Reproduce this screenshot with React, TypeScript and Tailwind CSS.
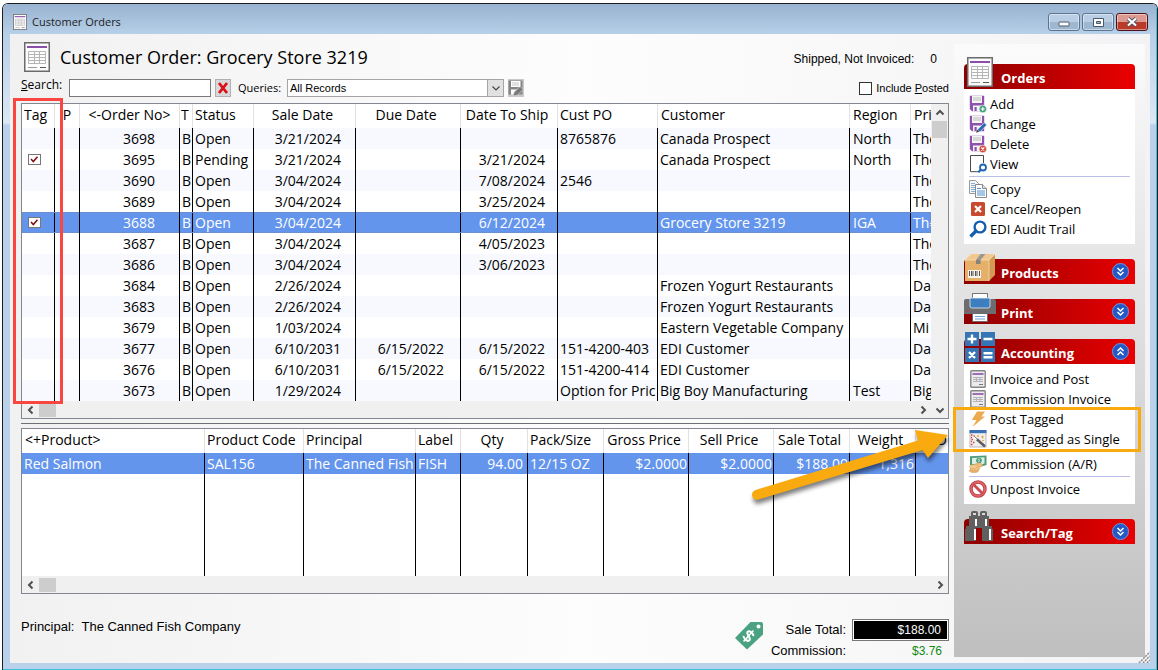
import React from "react";
import clsx from "clsx";

interface Column {
  label: string;
  width?: string;
  head: string;
  cell: string;
}

interface OrderRow {
  tag?: boolean;
  selected?: boolean;
  cells: string[];
}

const ORDER_COLUMNS: Column[] = [
  { label: "P", width: "w-[25px]", head: "text-center", cell: "text-center" },
  { label: "<-Order No>", width: "w-[100px]", head: "text-center", cell: "text-right pr-6" },
  { label: "T", width: "w-[13px]", head: "pl-px", cell: "pl-[2px]" },
  { label: "Status", width: "w-[61px]", head: "pl-[2px]", cell: "pl-[2px]" },
  { label: "Sale Date", width: "w-[102px]", head: "text-center pr-1", cell: "text-right pr-3.5" },
  { label: "Due Date", width: "w-[105px]", head: "text-center pr-1", cell: "text-right pr-4" },
  { label: "Date To Ship", width: "w-[97px]", head: "text-center pr-1", cell: "text-right pr-3" },
  { label: "Cust PO", width: "w-[100px]", head: "pl-[2px]", cell: "pl-[2px]" },
  { label: "Customer", width: "w-[192px]", head: "pl-[3px]", cell: "pl-[2px]" },
  { label: "Region", width: "w-[61px]", head: "pl-[3px]", cell: "pl-[3px]" },
  { label: "Pri", head: "pl-[3px]", cell: "pl-[2px]" },
];

const ORDERS: OrderRow[] = [
  { cells: ["", "3698", "B", "Open", "3/21/2024", "", "", "8765876", "Canada Prospect", "North", "The"] },
  { tag: true, cells: ["", "3695", "B", "Pending", "3/21/2024", "", "3/21/2024", "", "Canada Prospect", "North", "The"] },
  { cells: ["", "3690", "B", "Open", "3/04/2024", "", "7/08/2024", "2546", "", "", "The"] },
  { cells: ["", "3689", "B", "Open", "3/04/2024", "", "3/25/2024", "", "", "", "The"] },
  { tag: true, selected: true, cells: ["", "3688", "B", "Open", "3/04/2024", "", "6/12/2024", "", "Grocery Store 3219", "IGA", "The"] },
  { cells: ["", "3687", "B", "Open", "3/04/2024", "", "4/05/2023", "", "", "", "The"] },
  { cells: ["", "3686", "B", "Open", "3/04/2024", "", "3/06/2023", "", "", "", "The"] },
  { cells: ["", "3684", "B", "Open", "2/26/2024", "", "", "", "Frozen Yogurt Restaurants", "", "Da"] },
  { cells: ["", "3683", "B", "Open", "2/26/2024", "", "", "", "Frozen Yogurt Restaurants", "", "Da"] },
  { cells: ["", "3679", "B", "Open", "1/03/2024", "", "", "", "Eastern Vegetable Company", "", "Mi"] },
  { cells: ["", "3677", "B", "Open", "6/10/2031", "6/15/2022", "6/15/2022", "151-4200-403", "EDI Customer", "", "Da"] },
  { cells: ["", "3676", "B", "Open", "6/10/2031", "6/15/2022", "6/15/2022", "151-4200-414", "EDI Customer", "", "Da"] },
  { cells: ["", "3673", "B", "Open", "1/29/2024", "", "", "Option for Pric", "Big Boy Manufacturing", "Test", "Big"] },
];

const PRODUCT_COLUMNS: Column[] = [
  { label: "<+Product>", width: "w-[183px]", head: "pl-[3px]", cell: "pl-[2px]" },
  { label: "Product Code", width: "w-[99px]", head: "pl-[2px]", cell: "pl-[2px]" },
  { label: "Principal", width: "w-[112px]", head: "pl-[2px]", cell: "pl-[2px]" },
  { label: "Label", width: "w-[45px]", head: "pl-[2px]", cell: "pl-[2px]" },
  { label: "Qty", width: "w-[67px]", head: "text-center pr-1", cell: "text-right pr-1" },
  { label: "Pack/Size", width: "w-[76px]", head: "pl-[2px]", cell: "pl-[2px]" },
  { label: "Gross Price", width: "w-[85px]", head: "text-center pr-1", cell: "text-right pr-px" },
  { label: "Sell Price", width: "w-[85px]", head: "text-center pr-1", cell: "text-right pr-px" },
  { label: "Sale Total", width: "w-[76px]", head: "text-center pr-1", cell: "text-right pr-px" },
  { label: "Weight", width: "w-[66px]", head: "text-center pr-1", cell: "text-right pr-px" },
  { label: "D", head: "text-right pr-px", cell: "text-right" },
];

const PRODUCT = ["Red Salmon", "SAL156", "The Canned Fish", "FISH", "94.00", "12/15 OZ", "$2.0000", "$2.0000", "$188.00", "1,316", ""];

/* ---------- icons ---------- */

const FormIcon = ({ className }: { className?: string }) => (
  <svg viewBox="0 0 26 30" className={className} aria-hidden="true">
    <rect x="0.75" y="0.75" width="24.5" height="28.5" fill="#fdfdfd" stroke="#6b6b6b" strokeWidth="1.5" />
    <rect x="3" y="4" width="20" height="2" fill="#8a4fa8" />
    <path d="M4.5 9.5h17v12h-17zM4.5 12.5h17M4.5 15.5h17M4.5 18.5h17M10.5 9.5v12M15.5 9.5v12" fill="none" stroke="#b5b5b5" />
    <path d="M4 25.5h9" stroke="#9a9a9a" />
    <path d="M16 25.5h6" stroke="#555" />
  </svg>
);

const Floppy = () => (
  <>
    <path d="M0.8 0.8H15.2V16.2H3L0.8 14z" fill="#8e52ae" />
    <rect x="3" y="1" width="10" height="7" fill="#f4f4f4" />
    <path d="M4 3h8M4 5h8" stroke="#bdbdbd" />
    <rect x="4" y="10.5" width="8" height="5.7" fill="#f4f4f4" />
    <rect x="5.5" y="12" width="2.2" height="4" fill="#8e52ae" />
  </>
);

const Icon = ({ children }: { children: React.ReactNode }) => (
  <svg viewBox="0 0 18 18" className="h-[18px] w-[18px] shrink-0" aria-hidden="true">
    {children}
  </svg>
);

const AddIcon = () => (
  <Icon>
    <Floppy />
    <circle cx="13.8" cy="14" r="3.8" fill="#3f9f7b" stroke="#fff" strokeWidth="0.6" />
    <path d="M13.8 12v4M11.8 14h4" stroke="#fff" strokeWidth="1.2" />
  </Icon>
);

const ChangeIcon = () => (
  <Icon>
    <Floppy />
    <path d="M8.2 15l7-7.4 2.6 2.4-7 7z" fill="#2d6cb5" stroke="#fff" strokeWidth="0.6" />
    <path d="M7 17.8l1.4-3 1.8 1.9z" fill="#3b3b3b" />
  </Icon>
);

const DeleteIcon = () => (
  <Icon>
    <Floppy />
    <circle cx="13.8" cy="14" r="3.8" fill="#cf4a35" stroke="#fff" strokeWidth="0.6" />
    <path d="M12.3 12.5l3 3M15.3 12.5l-3 3" stroke="#fff" strokeWidth="1.2" />
  </Icon>
);

const ViewIcon = () => (
  <Icon>
    <path d="M14.5 8V0.5H1.5v16.2H10" fill="#fff" stroke="#4a4a4a" />
    <circle cx="14" cy="12.5" r="3" fill="#fff" stroke="#1f66b3" strokeWidth="1.8" />
    <path d="M11.8 14.8L9.4 17.2" stroke="#1f66b3" strokeWidth="2.2" />
  </Icon>
);

const CopyIcon = () => (
  <Icon>
    <path d="M0.5 0.5H6.5L9.5 3.5V13.5H0.5z" fill="#f6f6f6" stroke="#9a9a9a" />
    <path d="M2 3.5h4M2 5.5h5M2 7.5h5M2 9.5h5M2 11.5h5" stroke="#7fb0dc" />
    <path d="M6.5 4.5H13.5L17.5 8.5V17.5H6.5z" fill="#fff" stroke="#8b8b8b" />
    <path d="M13.5 4.5v4h4" fill="#ddd" stroke="#8b8b8b" />
    <path d="M8 8.5h4M8 11h8M8 13h8M8 15h8" stroke="#4d8fce" />
  </Icon>
);

const CancelIcon = () => (
  <Icon>
    <rect x="2" y="2" width="14" height="14" rx="1.5" fill="#c9492f" />
    <path d="M6 6l6 6M12 6l-6 6" stroke="#fff" strokeWidth="2.2" />
  </Icon>
);

const AuditIcon = () => (
  <Icon>
    <circle cx="11" cy="7" r="5.4" fill="#fff" stroke="#155fb0" strokeWidth="2.4" />
    <path d="M7 11L1.5 16.5" stroke="#155fb0" strokeWidth="3.4" />
  </Icon>
);

const InvoiceIcon = () => (
  <Icon>
    <rect x="1.8" y="0.8" width="14.4" height="16.4" rx="0.8" fill="#ececef" stroke="#858585" strokeWidth="1.4" />
    <path d="M3.5 4h11" stroke="#8a4fa8" strokeWidth="1.6" />
    <path d="M4 7.5h10M4 9.5h10M4 11.5h10M7.5 7v5M11 7v5" stroke="#b4b4b8" />
    <path d="M10 14.5h4" stroke="#777" />
  </Icon>
);

const BoltIcon = () => (
  <Icon>
    <path d="M8 1.5H16L12.5 6.5H16L3.5 17L7.5 10H2.8z" fill="#eeaa50" />
  </Icon>
);

const WizardIcon = () => (
  <Icon>
    <rect x="1" y="0.5" width="16" height="16.5" fill="#f0f0f0" stroke="#a9a9a9" strokeWidth="0.8" />
    <rect x="0.5" y="0" width="17" height="3.2" fill="#3a72b8" />
    <path d="M2 5h1.5M4.5 5.800h1M2 7.500h1M2.500 9.500h1.500M2 11.500h1M4 12.500h1.500M2 14.500h1.500" stroke="#d9443c" strokeWidth="1.400" fill="none" />
    <path d="M7 8.500l9 8" stroke="#5f5f63" strokeWidth="2.600" />
    <path d="M5.500 7.200l2.400 2.200" stroke="#fff" strokeWidth="2.600" />
    <path d="M5.200 6.200l3 2.800" stroke="#77777b" strokeWidth="1" />
    <path d="M9 5v2M8 6h2M13.500 5.500v3M12 7h3M13 10.500h2" stroke="#edaa44" />
  </Icon>
);

const MoneyIcon = () => (
  <Icon>
    <path d="M1 1.2L17.5 0.5V10L9 12.5L1 10z" fill="#4d9b7a" />
    <path d="M3 3l12.5-0.8V8.5L9 10.4L3 8.8z" fill="#dcefe6" />
    <circle cx="10" cy="5.5" r="2.8" fill="#4d9b7a" />
    <path d="M11 4.3c-1.4-.9-2.4.4-1 1s.4 1.9-1 1.1" stroke="#fff" strokeWidth="0.7" fill="none" />
    <ellipse cx="9.5" cy="10.2" rx="4" ry="2" fill="#f0bd78" stroke="#d9a35c" strokeWidth="0.6" />
    <ellipse cx="5" cy="15.6" rx="4.6" ry="2" fill="#eab06a" stroke="#d9a35c" strokeWidth="0.6" />
    <ellipse cx="6" cy="13.6" rx="4.6" ry="2" fill="#f2c283" stroke="#d9a35c" strokeWidth="0.6" />
    <ellipse cx="4.6" cy="11.6" rx="4.2" ry="1.9" fill="#f5cc94" stroke="#d9a35c" strokeWidth="0.6" />
  </Icon>
);

const UnpostIcon = () => (
  <Icon>
    <circle cx="9" cy="9" r="7" fill="#fff" stroke="#b93a40" strokeWidth="3.4" />
    <circle cx="9" cy="9" r="7" fill="none" stroke="#dc6468" strokeWidth="1.8" />
    <path d="M4.2 4.2l9.6 9.6" stroke="#cd4a50" strokeWidth="2.8" />
  </Icon>
);

const BoxIcon = () => (
  <svg viewBox="0 0 31 29" className="h-[29px] w-[31px]" aria-hidden="true">
    <path d="M1 7H25V28H1z" fill="#e6b06a" />
    <path d="M25 7L31 1V22L25 28z" fill="#d39a52" />
    <path d="M1 7L7 1H31L25 7z" fill="#f1c98f" />
    <path d="M1 7h24v21M25 7l6-6M1 7l6-6" fill="none" stroke="#f8e2bd" strokeWidth="0.7" />
    <path d="M16.500 1h5l-5 6h-4.500z" fill="#9b9891" />
    <path d="M12 7h4.500v4H12z" fill="#86837c" />
    <rect x="4" y="17" width="13" height="8" fill="#f7f2ea" />
    <path d="M5.5 18v5M7.5 18v5M9 18v5M11.5 18v5M13 18v5M15.5 18v5" stroke="#555" />
  </svg>
);

const PrinterIcon = () => (
  <svg viewBox="0 0 32 29" className="h-[29px] w-8" aria-hidden="true">
    <path d="M0 8q0-2 2-2h28q2 0 2 2v13H0z" fill="#6d6d6f" />
    <rect x="8.5" y="0.5" width="15" height="6" fill="#fff" stroke="#777" />
    <path d="M6 5h20v8q0 2-2 2H8q-2 0-2-2z" fill="#3d7ebf" stroke="#e9eef4" strokeWidth="0.8" />
    <rect x="2" y="17.5" width="3" height="1" fill="#c33" />
    <rect x="8.5" y="20.500" width="15" height="8" fill="#fff" stroke="#6a6a6a" />
    <path d="M11 23.5h10M11 26h10" stroke="#6fa3d4" />
  </svg>
);

const CalcIcon = () => (
  <svg viewBox="0 0 31 30" className="h-[30px] w-[31px]" aria-hidden="true">
    <path d="M1 0h14v14H1zM17 0h14v14H17zM1 16h14v14H1zM17 16h14v14H17z" fill="#3574b5" />
    <path d="M3.5 7h9M8 2.5v9M19.5 7h9" stroke="#fff" strokeWidth="2.4" />
    <path d="M5 20l6 6M11 20l-6 6M19.5 21.2h9M19.5 25.2h9" stroke="#fff" strokeWidth="2.4" />
  </svg>
);

const BinocularsIcon = () => (
  <svg viewBox="0 0 30 32" className="h-8 w-[30px]" aria-hidden="true">
    <path d="M7 3q0-2 2-2h3q2 0 2 2v3h2V3q0-2 2-2h3q2 0 2 2v3h2v10h3v3h1v12H18V18h-6v13H1V19h1v-3h3V6h2z" fill="#606060" />
    <path d="M9 4h3M18 4h3" stroke="#fff" strokeWidth="1.4" />
    <path d="M12 9v7M22 9v7M11 19v11M26 19v11" stroke="#fff" strokeWidth="2" />
  </svg>
);

const PriceTagIcon = () => (
  <svg viewBox="0 0 28 29" className="h-[29px] w-7" aria-hidden="true">
    <path d="M15.5 1H26q2 0 2 2v10.5L12 28.5L0 17z" fill="#4ba282" />
    <circle cx="23.5" cy="5.5" r="2" fill="#fff" />
    <g transform="translate(13.500 15) rotate(42)" fill="none" stroke="#fff" strokeWidth="2">
      <path d="M3.600-3.200C2-5.400-3.400-5.200-3.400-2.400S3.600-0.400 3.600 2.400-2 5.400-3.800 3.200" />
      <path d="M0-7.400v14.800" strokeWidth="1.600" />
    </g>
  </svg>
);

/* ---------- window parts ---------- */

const CAPTION_BUTTON =
  "flex h-[18px] w-8 items-center justify-center rounded-[3px] border shadow-[inset_0_0_0_1px_rgba(255,255,255,0.45)]";

const TitleBar = () => (
  <header className="flex h-[30px] shrink-0 items-center pt-1.5 pr-2 pl-2.5">
    <FormIcon className="h-4 w-3.5" />
    <span className="ml-[5px] flex-1 text-[11px] text-[#1c1c1c]">Customer Orders</span>
    <div className="flex gap-0.5">
      <button aria-label="Minimize" className={clsx(CAPTION_BUTTON, "border-[#5c7590] bg-linear-to-b from-[#b9cee4] from-50% to-[#9fb8d2] to-50%")}>
        <svg viewBox="0 0 12 6" className="mt-1 h-1.5 w-3" aria-hidden="true">
          <rect x="1" y="1" width="10" height="4" rx="0.5" fill="#fff" stroke="#4b5867" />
        </svg>
      </button>
      <button aria-label="Maximize" className={clsx(CAPTION_BUTTON, "border-[#5c7590] bg-linear-to-b from-[#b9cee4] from-50% to-[#9fb8d2] to-50%")}>
        <svg viewBox="0 0 11 9" className="h-[9px] w-[11px]" aria-hidden="true">
          <path d="M0.5 0.5h10v8h-10zM3.5 3.5h4v2h-4z" fill="#fff" fillRule="evenodd" stroke="#4b5867" />
        </svg>
      </button>
      <button aria-label="Close" className={clsx(CAPTION_BUTTON, "border-[#4c1119] bg-linear-to-b from-[#dc9a90] from-50% to-[#b93a28] to-50%")}>
        <svg viewBox="0 0 12 10" className="h-2.5 w-3" aria-hidden="true">
          <path d="M2 1.5l8 7M10 1.5l-8 7" stroke="#52535f" strokeWidth="4" />
          <path d="M2 1.5l8 7M10 1.5l-8 7" stroke="#fff" strokeWidth="2.2" />
        </svg>
      </button>
    </div>
  </header>
);

const Arrow = ({ dir }: { dir: "left" | "right" | "up" | "down" }) => {
  const paths = {
    left: "M6.5 1.5L3 5l3.5 3.5",
    right: "M3.5 1.5L7 5L3.5 8.5",
    up: "M1.5 6.5L5 3l3.5 3.5",
    down: "M1.5 3.5L5 7l3.5-3.5",
  };
  return (
    <svg viewBox="0 0 10 10" className="h-2.5 w-2.5" aria-hidden="true">
      <path d={paths[dir]} fill="none" stroke="#505050" strokeWidth="2" />
    </svg>
  );
};

const HScroll = ({ corner }: { corner?: boolean }) => (
  <div className="flex h-[17px] items-center bg-[#f0f0f0]">
    <div className="flex w-[17px] justify-center">
      <Arrow dir="left" />
    </div>
    <div className="h-3.5 w-[17px] bg-[#cdcdcd]" />
    <div className="flex-1" />
    <div className="flex w-[17px] justify-center">
      <Arrow dir="right" />
    </div>
    {corner && (
      <div className="flex w-[17px] justify-center">
        <Arrow dir="down" />
      </div>
    )}
  </div>
);

const Toolbar = () => (
  <div className="mt-[5px] flex h-5 items-end text-[12px]">
    <label htmlFor="search" className="w-12 self-start leading-4">
      <u>S</u>earch:
    </label>
    <input id="search" type="text" className="h-[18px] w-[142px] border border-[#7a7a7a] bg-white px-1 outline-none" />
    <button aria-label="Clear search" className="ml-1 flex h-[18px] w-4 items-center justify-center border border-[#b0b0b0] bg-[#d9d9d9]">
      <svg viewBox="0 0 12 12" className="h-3 w-3" aria-hidden="true">
        <path d="M2 1l8 10M10 1L2 11" stroke="#dc0f14" strokeWidth="2.8" />
      </svg>
    </button>
    <label htmlFor="queries" className="ml-[7px] w-[49px] text-[11px] leading-[18px]">
      Queries:
    </label>
    <div className="relative">
      <select
        id="queries"
        className="block h-[18px] w-[217px] appearance-none border border-[#a5a5a5] bg-white pl-[2px] font-['Liberation_Sans',sans-serif] text-[11px] outline-none">
        <option>All Records</option>
      </select>
      <span className="pointer-events-none absolute top-0 right-0 flex h-[18px] w-[17px] items-center justify-center border border-[#a5a5a5] bg-[#e1e1e1]">
        <svg viewBox="0 0 10 10" className="h-2.5 w-2.5" aria-hidden="true">
          <path d="M1.5 3.5L5 7l3.5-3.5" fill="none" stroke="#444" strokeWidth="1.2" />
        </svg>
      </span>
    </div>
    <button aria-label="Save query" className="ml-1 h-[18px] w-4 bg-[#d9d9d9]">
      <svg viewBox="0 0 16 18" className="h-[18px] w-4" aria-hidden="true">
        <rect width="16" height="18" fill="#c9c9c9" />
        <path d="M0.5 1.5h14v14h-14z" fill="#858585" />
        <rect x="3" y="2" width="9.5" height="6" fill="#fff" />
        <path d="M4 4h7M4 6h7" stroke="#c4c4c4" />
        <rect x="3" y="10.5" width="6" height="5" fill="#fff" />
        <path d="M5 17l1.2-4 6-5.5 3 3-6 5.8z" fill="#7a7a7a" stroke="#e5e5e5" strokeWidth="0.6" />
      </svg>
    </button>
    <label className="ml-auto flex h-[18px] items-center gap-1 font-['Liberation_Sans',sans-serif] text-[11px]">
      <input type="checkbox" className="h-[13px] w-[13px] appearance-none border border-[#333] bg-white" />
      <span>
        Include <u>P</u>osted
      </span>
    </label>
  </div>
);

const TagBox = ({ order }: { order: string }) => (
  <span className="relative ml-1.5 block h-[11px] w-[13px]">
    <input
      type="checkbox"
      defaultChecked
      aria-label={`Tag order ${order}`}
      className="peer block h-[11px] w-[13px] appearance-none border border-[#777] bg-white"
    />
    <svg viewBox="0 0 13 11" className="pointer-events-none absolute inset-0 hidden h-[11px] w-[13px] peer-checked:block" aria-hidden="true">
      <path d="M3 5l2.3 2.6L9.5 2.8" fill="none" stroke="#7d0d12" strokeWidth="1.5" />
    </svg>
  </span>
);

const OrdersGrid = () => (
  <section className="relative mt-1.5 border border-[#828790] bg-white">
    <div className="flex">
      <div className="min-w-0 flex-1 overflow-hidden">
        <table className="w-full table-fixed border-separate border-spacing-0 text-left text-[14px] whitespace-nowrap">
          <thead>
            <tr className="h-6 leading-5">
              <th className="w-[33px] border-r border-[#e2e2e2] p-0 pb-0.5 pl-[2px] font-normal">Tag</th>
              {ORDER_COLUMNS.map((col) => (
                <th key={col.label} className={clsx("overflow-hidden border-r border-[#e2e2e2] p-0 pb-0.5 font-normal last:border-r-0", col.width, col.head)}>
                  {col.label}
                </th>
              ))}
            </tr>
          </thead>
          <tbody>
            {ORDERS.map((row) => (
              <tr
                key={row.cells[1]}
                className={clsx(
                  "h-[21px] leading-5",
                  row.selected ? "bg-[#6495ed] text-white outline-1 -outline-offset-1 outline-[#7389ad] outline-dotted" : "odd:bg-[#f7f9ff]"
                )}>
                <td className="border-r border-black p-0">{row.tag && <TagBox order={row.cells[1]} />}</td>
                {row.cells.map((cell, i) => (
                  <td key={i} className={clsx("overflow-hidden border-r border-black p-0 last:border-r-0", ORDER_COLUMNS[i].cell)}>
                    {cell}
                  </td>
                ))}
              </tr>
            ))}
          </tbody>
        </table>
      </div>
      <div className="flex w-[17px] flex-col items-center bg-[#f0f0f0]">
        <div className="flex h-[17px] items-center">
          <Arrow dir="up" />
        </div>
        <div className="h-[17px] w-[15px] bg-[#cdcdcd]" />
      </div>
    </div>
    <HScroll corner />
    {/* highlight round the Tag column */}
    <div className="pointer-events-none absolute -top-1.5 bottom-3.5 -left-[9px] w-[50px] border-3 border-[#fa4640]" />
  </section>
);

const ProductsGrid = () => (
  <section className="border border-[#828790] bg-white">
    <div className="overflow-hidden">
      <table className="w-full table-fixed border-separate border-spacing-0 text-left text-[14px] whitespace-nowrap">
        <thead>
          <tr className="h-6 leading-5">
            {PRODUCT_COLUMNS.map((col) => (
              <th key={col.label} className={clsx("overflow-hidden border-r border-[#e2e2e2] p-0 pb-0.5 font-normal last:border-r-0", col.width, col.head)}>
                {col.label}
              </th>
            ))}
          </tr>
        </thead>
        <tbody>
          <tr className="h-[21px] bg-[#6495ed] leading-5 text-white">
            {PRODUCT.map((cell, i) => (
              <td key={i} className={clsx("overflow-hidden border-r border-black p-0 last:border-r-0", PRODUCT_COLUMNS[i].cell)}>
                {cell}
              </td>
            ))}
          </tr>
          <tr className="h-[102px]">
            {PRODUCT.map((_, i) => (
              <td key={i} className="border-r border-black p-0 last:border-r-0" />
            ))}
          </tr>
        </tbody>
      </table>
    </div>
    <HScroll />
  </section>
);

const Totals = () => (
  <footer className="mt-[25px] flex items-start font-['Liberation_Sans',sans-serif] text-[13px] leading-5">
    <p className="-mt-0.5 flex-1 whitespace-pre">Principal:  The Canned Fish Company</p>
    <div className="mt-0.5">
      <PriceTagIcon />
    </div>
    <div className="grid grid-cols-[83px_97px] items-center gap-x-1.5 text-right">
      <span>Sale Total:</span>
      <output className="h-[22px] border border-[#777] bg-black pr-[7px] text-[12px] text-white shadow-[inset_0_0_0_1px_#fff]">$188.00</output>
      <span>Commission:</span>
      <span className="pr-[7px] text-[12px] text-[#128a12]">$3.76</span>
    </div>
  </footer>
);

/* ---------- task panel ---------- */

interface GroupProps {
  title: string;
  icon: React.ReactNode;
  toggle?: "up" | "down";
  children?: React.ReactNode;
}

const TaskGroup = ({ title, icon, toggle, children }: GroupProps) => (
  <section>
    <div className="relative flex h-[25px] items-center rounded-t-[4px] bg-linear-to-r from-[#8e0000] to-[#ea0000] pr-1.5 pl-[37px]">
      <span className="absolute bottom-0.5 left-0">{icon}</span>
      <h2 className="flex-1 pt-1 text-[13px] font-bold text-white">{title}</h2>
      {toggle && (
        <button aria-label={toggle === "up" ? `Collapse ${title}` : `Expand ${title}`} className="h-[17px] w-[17px]">
          <svg viewBox="0 0 17 17" className="h-[17px] w-[17px]" aria-hidden="true">
            <circle cx="8.5" cy="8.5" r="8" fill="#2458c4" stroke="#6b9bea" />
            <path
              d={toggle === "up" ? "M5.5 8l3-3 3 3M5.5 12l3-3 3 3" : "M5.5 5l3 3 3-3M5.5 9l3 3 3-3"}
              fill="none"
              stroke="#fff"
              strokeWidth="1.5"
            />
          </svg>
        </button>
      )}
    </div>
    {children && <div className="bg-white px-[5px] py-[5px]">{children}</div>}
  </section>
);

const TaskItem = ({ icon, children }: { icon: React.ReactNode; children: React.ReactNode }) => (
  <button className="flex h-5 w-full items-center gap-[3px] text-left text-[13px] leading-5 whitespace-nowrap">
    {icon}
    {children}
  </button>
);

const Divider = () => (
  <div className="flex h-[5px] items-center">
    <div className="h-px w-full bg-[#bcc0e8]" />
  </div>
);

const TaskPanel = () => (
  <aside className="mt-2.5 mr-[5px] mb-1.5 flex w-[191px] shrink-0 flex-col gap-[15px] bg-linear-to-b from-[#fbfbfb] to-[#bfbfbf] px-2.5 pt-5">
    <TaskGroup title="Orders" icon={<FormIcon className="ml-[3px] h-[30px] w-[26px]" />}>
      <TaskItem icon={<AddIcon />}>Add</TaskItem>
      <TaskItem icon={<ChangeIcon />}>Change</TaskItem>
      <TaskItem icon={<DeleteIcon />}>Delete</TaskItem>
      <TaskItem icon={<ViewIcon />}>View</TaskItem>
      <Divider />
      <TaskItem icon={<CopyIcon />}>Copy</TaskItem>
      <TaskItem icon={<CancelIcon />}>Cancel/Reopen</TaskItem>
      <TaskItem icon={<AuditIcon />}>EDI Audit Trail</TaskItem>
    </TaskGroup>
    <TaskGroup title="Products" icon={<BoxIcon />} toggle="down" />
    <TaskGroup title="Print" icon={<PrinterIcon />} toggle="down" />
    <TaskGroup title="Accounting" icon={<CalcIcon />} toggle="up">
      <TaskItem icon={<InvoiceIcon />}>Invoice and Post</TaskItem>
      <TaskItem icon={<InvoiceIcon />}>Commission Invoice</TaskItem>
      <div className="relative">
        <TaskItem icon={<BoltIcon />}>Post Tagged</TaskItem>
        <TaskItem icon={<WizardIcon />}>Post Tagged as Single</TaskItem>
        {/* callout box and its arrow */}
        <div className="pointer-events-none absolute -top-0.5 -right-[11px] -left-4 h-[45px] border-3 border-[#f9aa0f]" />
        <svg viewBox="0 0 210 90" className="pointer-events-none absolute top-4 right-[178px] h-[90px] w-[210px] drop-shadow-[1px_4px_2px_rgba(0,0,0,0.5)]" aria-hidden="true">
          <path d="M13.500 65L176 15.500L173 5L206 10L186 33L180.500 25L16.500 74.500A4.800 4.800 0 0 1 13.500 65z" fill="#f9aa0f" />
        </svg>
      </div>
      <div className="h-[5px]" />
      <TaskItem icon={<MoneyIcon />}>Commission (A/R)</TaskItem>
      <Divider />
      <TaskItem icon={<UnpostIcon />}>Unpost Invoice</TaskItem>
    </TaskGroup>
    <TaskGroup title="Search/Tag" icon={<BinocularsIcon />} toggle="down" />
  </aside>
);

const App = () => {
  return (
    <div className="flex min-h-screen bg-white pt-[3px] pl-[2px] font-['Open_Sans','Noto_Sans',sans-serif] text-black">
      <div className="flex min-w-0 flex-1 flex-col overflow-hidden rounded-t-[6px] border-t border-r border-l border-[#1d1d1d]">
        <div className="flex flex-1 flex-col border-r border-b border-[#3dbfd9] bg-[#b9d1ea] bg-[linear-gradient(#98b3d0,#b7cfe8_30px,#dbe8f5_119px,#b9d1ea_121px)]">
          <TitleBar />
          <div className="relative mr-1.5 mb-1.5 ml-[7px] flex flex-1 gap-[5px] bg-linear-to-r from-[#f1f1f1] via-[#fdfdfd] to-[#f3f3f5]">
            <main className="flex min-w-0 flex-1 flex-col pl-[11px]">
              <div className="mt-2 flex h-[30px] items-center pl-[3px]">
                <FormIcon className="h-[30px] w-[26px]" />
                <h1 className="ml-2.5 flex-1 text-[18px]">Customer Order: Grocery Store 3219</h1>
                <p className="flex gap-4 pt-1 pr-3 font-['Liberation_Sans',sans-serif] text-[12px]">
                  <span>Shipped, Not Invoiced:</span>
                  <span>0</span>
                </p>
              </div>
              <Toolbar />
              <OrdersGrid />
              <div className="my-1 h-px bg-[#6d7075]" />
              <ProductsGrid />
              <Totals />
            </main>
            <TaskPanel />
            {/* resize grip */}
            <svg viewBox="0 0 12 12" className="pointer-events-none absolute right-0 bottom-0 h-3 w-3" aria-hidden="true">
              <path d="M1 12L12 1M5 12l7-7M9 12l3-3" stroke="#8c8c8c" strokeWidth="1.5" strokeDasharray="2 1" />
            </svg>
          </div>
        </div>
      </div>
    </div>
  );
};

export default App;
